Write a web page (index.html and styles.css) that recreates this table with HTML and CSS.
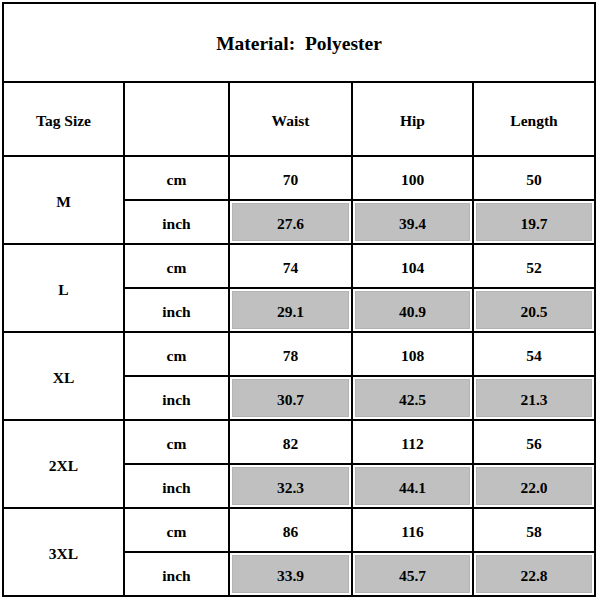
FILE: index.html
```html
<!DOCTYPE html>
<html lang="en">
<head>
<meta charset="utf-8">
<title>Size Chart</title>
<link rel="stylesheet" href="styles.css">
</head>
<body>
<div class="chart">
  <div class="cell title">Material:&nbsp; Polyester</div>
  <div class="cell">Tag Size</div>
  <div class="cell"></div>
  <div class="cell">Waist</div>
  <div class="cell">Hip</div>
  <div class="cell">Length</div>

  <div class="cell size">M</div>
  <div class="cell">cm</div><div class="cell">70</div><div class="cell">100</div><div class="cell">50</div>
  <div class="cell">inch</div><div class="cell gray">27.6</div><div class="cell gray">39.4</div><div class="cell gray">19.7</div>

  <div class="cell size">L</div>
  <div class="cell">cm</div><div class="cell">74</div><div class="cell">104</div><div class="cell">52</div>
  <div class="cell">inch</div><div class="cell gray">29.1</div><div class="cell gray">40.9</div><div class="cell gray">20.5</div>

  <div class="cell size">XL</div>
  <div class="cell">cm</div><div class="cell">78</div><div class="cell">108</div><div class="cell">54</div>
  <div class="cell">inch</div><div class="cell gray">30.7</div><div class="cell gray">42.5</div><div class="cell gray">21.3</div>

  <div class="cell size">2XL</div>
  <div class="cell">cm</div><div class="cell">82</div><div class="cell">112</div><div class="cell">56</div>
  <div class="cell">inch</div><div class="cell gray">32.3</div><div class="cell gray">44.1</div><div class="cell gray">22.0</div>

  <div class="cell size">3XL</div>
  <div class="cell">cm</div><div class="cell">86</div><div class="cell">116</div><div class="cell">58</div>
  <div class="cell">inch</div><div class="cell gray">33.9</div><div class="cell gray">45.7</div><div class="cell gray">22.8</div>
</div>
</body>
</html>
```
FILE: styles.css
```css
html, body {
  margin: 0;
  padding: 0;
  background: #fff;
}

.chart {
  margin: 2px 0 0 2px;
  width: 594px;
  box-sizing: border-box;
  display: grid;
  grid-template-columns: 119px 103px 121px 119px 120px;
  grid-template-rows: 77px 72px repeat(10, 42px);
  gap: 2px;
  padding: 2px;
  background: #000;
  font-family: "Liberation Serif", "Times New Roman", serif;
  font-weight: bold;
  font-size: 15.5px;
  color: #000;
}

.cell {
  background: #fff;
  display: flex;
  align-items: center;
  justify-content: center;
  padding-top: 3px;
  box-sizing: border-box;
}

.title {
  grid-column: span 5;
  font-size: 19.5px;
}

.size {
  grid-row: span 2;
}

.gray {
  background: #c0c0c0;
  box-shadow: inset 0 0 0 2px #fff, inset 0 0 0 3px #b4b4b4;
}
```
